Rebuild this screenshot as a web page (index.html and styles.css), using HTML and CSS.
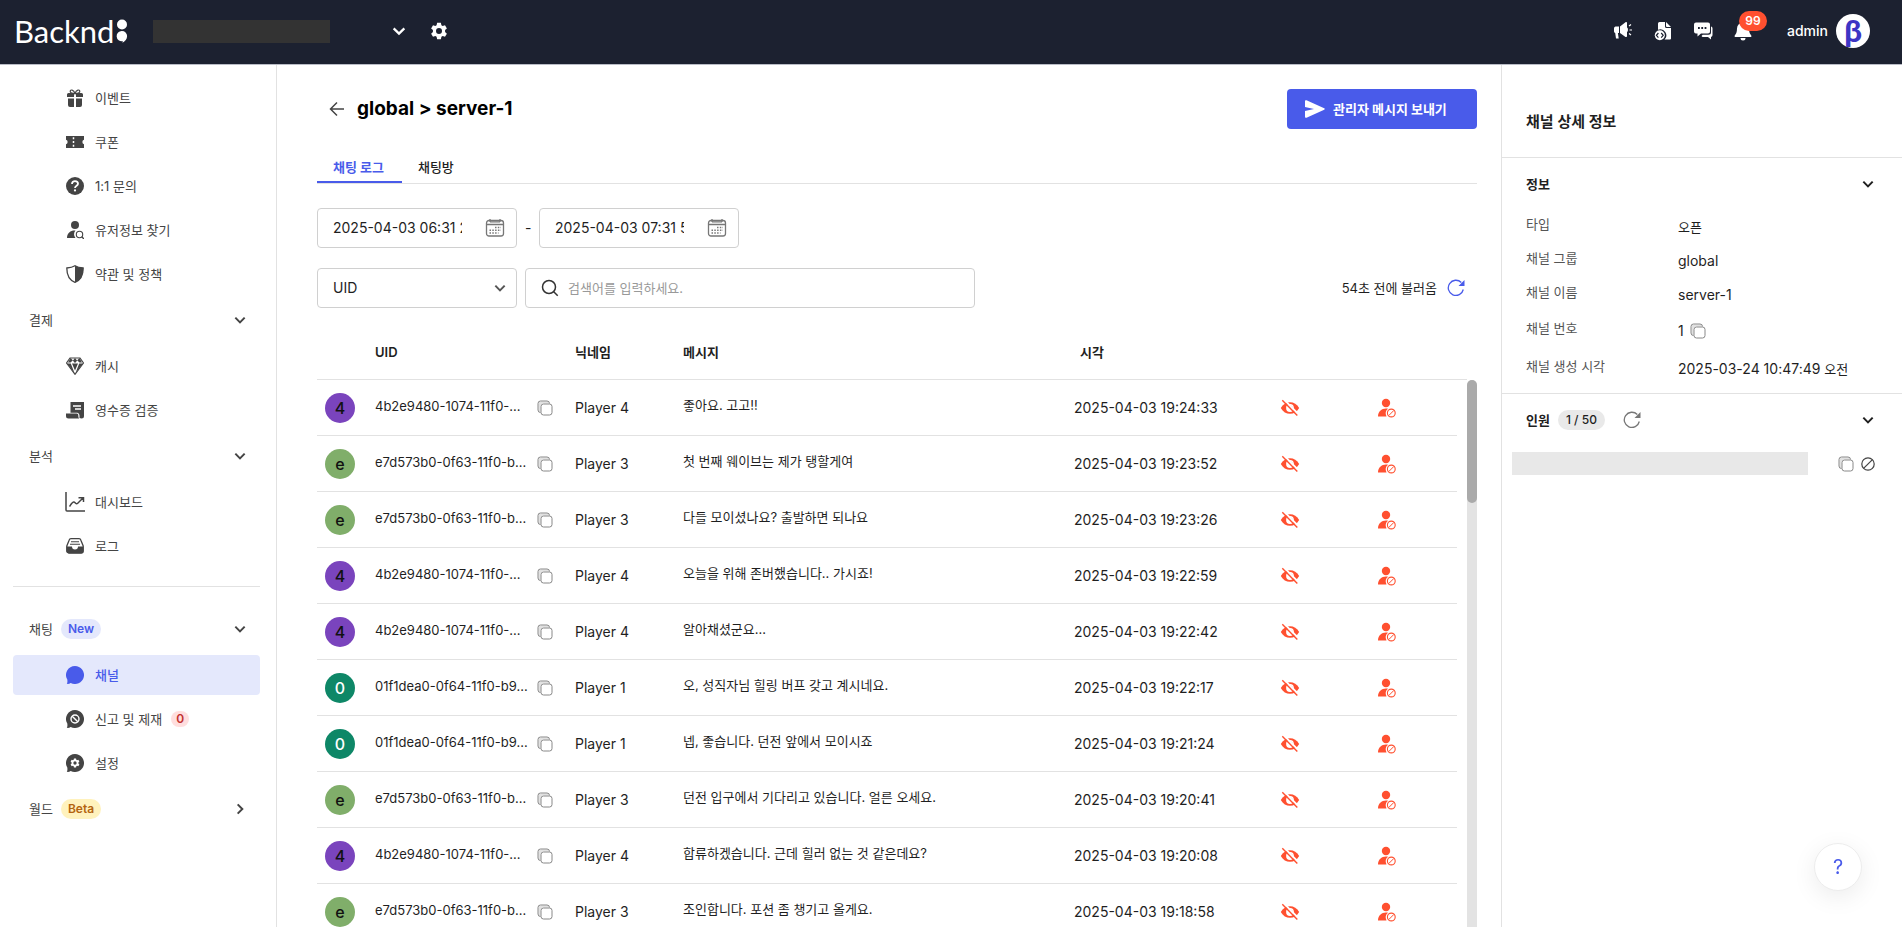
FILE: index.html
```html
<!DOCTYPE html>
<html lang="ko">
<head>
<meta charset="utf-8">
<meta name="viewport" content="width=device-width, initial-scale=1">
<title>Backnd - global &gt; server-1</title>
<link rel="stylesheet" href="styles.css">
</head>
<body>
<svg class="sprite" aria-hidden="true">
  <symbol id="down" viewBox="0 0 12 12"><path d="M2 4l4 4 4-4" fill="none" stroke="currentColor" stroke-width="1.7"/></symbol>
  <symbol id="right" viewBox="0 0 12 12"><path d="M4 2l4 4-4 4" fill="none" stroke="currentColor" stroke-width="1.7"/></symbol>
  <symbol id="copy" viewBox="0 0 16 16"><g fill="none" stroke="currentColor"><rect x="4" y="4" width="11" height="11" rx="2.5"/><path d="M3.5 12.5A2.5 2.5 0 0 1 1 10V3.500A2.500 2.500 0 0 1 3.500 1H10a2.500 2.500 0 0 1 2.500 2.500"/></g><path d="M1.500 10V3.500a2 2 0 0 1 2-2H10a2 2 0 0 1 2 2H6a2.500 2.500 0 0 0-2.500 2.500v6a2 2 0 0 1-2-2z" fill="currentColor" opacity=".25"/></symbol>
  <symbol id="refresh" viewBox="0 0 18 18"><path d="M16.300 10.500A7.600 7.600 0 1 1 14.300 3.500" fill="none" stroke="currentColor" stroke-width="1.300"/><path d="M17.500 1v6h-6z" fill="currentColor"/></symbol>
  <symbol id="eye" viewBox="0 0 20 18"><path d="M.8 9C3 5 6.200 3.200 10 3.200S17 5 19.200 9C17 13 13.800 14.800 10 14.800S3 13 .8 9z" fill="currentColor"/><circle cx="10" cy="9" r="3.900" fill="#fff"/><path d="M10 6.500A2.500 2.500 0 0 1 12.400 9.600L9.500 6.600z" fill="currentColor"/><path d="M3.700.4L19 15.700" stroke="#fff" stroke-width="2"/><path d="M2.300 1.300L17.300 16.500" stroke="currentColor" stroke-width="1.400"/></symbol>
  <symbol id="ban" viewBox="0 0 20 20"><circle cx="9" cy="5" r="4.200" fill="currentColor"/><path d="M1 18.500c0-5 3.500-8 8-8 .8 0 1.500.1 2 .3a5.800 5.800 0 0 0-1.500 7.700z" fill="currentColor"/><circle cx="14.300" cy="15" r="3.900" fill="none" stroke="currentColor" stroke-width="1.100"/><path d="M11.700 17.600l5.200-5.200" stroke="currentColor"/></symbol>
  <symbol id="bubble" viewBox="0 0 18 18"><path d="M9 0a9 9 0 1 1-4.300 16.900C3.300 17.900 2 18.100.8 17.800c.6-1 .8-2 .5-4.200A9 9 0 0 1 9 0z" fill="currentColor"/></symbol>
  <symbol id="gear" viewBox="0 0 24 24"><path fill="currentColor" fill-rule="evenodd" d="M9.500 1h5l.7 3.200 1.700 1 3.100-1 2.500 4.300-2.400 2.200v2.600l2.400 2.200-2.500 4.300-3.100-1-1.700 1-.7 3.200h-5l-.7-3.200-1.700-1-3.100 1-2.500-4.300 2.400-2.200v-2.600L1.500 8.500 4 4.200l3.100 1 1.700-1zM12 8a4 4 0 1 0 0 8 4 4 0 0 0 0-8z"/></symbol>
  <symbol id="calendar" viewBox="0 0 20 20"><g fill="none" stroke="currentColor" stroke-width="1.300"><rect x="1.500" y="2.500" width="17" height="15.500" rx="2.500"/><path d="M1.500 6.500h17M5 1v3M15 1v3M5 3.800h10"/></g><path d="M10 9.500h6M4.500 12.300h11.500M4.500 15h9" stroke="currentColor" stroke-width="1.500" stroke-dasharray="1.500 1.300"/></symbol>
</svg>

<header class="topbar">
  <a class="logo" href="#" aria-label="Backnd"><span>Backnd</span><svg width="12" height="24" viewBox="0 0 12 24"><circle cx="6" cy="5.500" r="5" fill="#fff"/><path d="M6 12a5.100 5.100 0 0 1 5.100 5.100c0 3-2 5.600-4.600 6.600l.2-1.600A5.100 5.100 0 1 1 6 12z" fill="#fff"/></svg></a>
  <div class="project"></div>
  <button class="icon-btn" aria-label="프로젝트 선택"><svg width="16" height="16"><use href="#down"/></svg></button>
  <button class="icon-btn gear" aria-label="설정"><svg width="18" height="18"><use href="#gear"/></svg></button>
  <div class="tools">
    <button class="icon-btn" aria-label="공지"><svg width="20" height="20" viewBox="0 0 20 20" fill="#fff"><path d="M1 7.500C1 6 2 5.500 3.500 5.500H6v6.500H4.900l.8 5.500H3L2.200 12C1.400 11.600 1 11 1 10zM7 5.500l5.500-4.200c.8-.5 1.500 0 1.500.8v4.500c1.300.5 1.300 4 0 4.500v4c0 .8-.7 1.300-1.500.8L7 12z"/><path d="M16 5l2-1.500M16.500 9h2.500M16 12.500l2 1.500" stroke="#fff" stroke-width="1.200"/></svg></button>
    <button class="icon-btn" aria-label="문서"><svg width="20" height="20" viewBox="0 0 20 20" fill="#fff"><path d="M5 2.500A1.500 1.500 0 0 1 6.500 1H12v4.500A1.500 1.500 0 0 0 13.500 7H18v10.500a1 1 0 0 1-1 1h-5.500A6 6 0 0 0 5 8.700zM13 1l5 5h-4a1 1 0 0 1-1-1z"/><circle cx="6.800" cy="14.300" r="5"/><path d="M5.400 12l-2 2.300 2 2.300M8.200 12l2 2.300-2 2.300" fill="none" stroke="#1c2130" stroke-width="1.200"/></svg></button>
    <button class="icon-btn" aria-label="채팅"><svg width="20" height="20" viewBox="0 0 20 20" fill="#fff"><path d="M3 1.500h12A2 2 0 0 1 17 3.500v7a2 2 0 0 1-2 2H8L4.500 15.500v-3H3a2 2 0 0 1-2-2v-7a2 2 0 0 1 2-2z"/><path d="M18 5.500c1 .3 1.500 1 1.500 2V14a2 2 0 0 1-1.500 2v2.500L15 16H9.500L8.500 15l1.200-1.300H15.500a2.500 2.500 0 0 0 2.500-2.500z"/><path d="M5 7h8.500" stroke="#1c2130" stroke-width="1.800" stroke-dasharray="1.800 1.500"/></svg></button>
    <button class="icon-btn bell" aria-label="알림 99"><svg width="20" height="20" viewBox="0 0 20 20" fill="#fff"><path d="M10 1.500a6 6 0 0 1 6 6c0 4 1 5.500 2.300 7v1.500H1.700v-1.500C3 13 4 11.500 4 7.500a6 6 0 0 1 6-6zM7.500 17h5a2.500 2.500 0 0 1-5 0z"/></svg><span class="count">99</span></button>
    <span class="user">admin</span>
    <a class="profile" href="#" aria-label="프로필">β</a>
  </div>
</header>

<div class="app">
  <nav class="sidebar">
    <a class="item" href="#"><svg width="18" height="18" viewBox="0 0 18 18" fill="currentColor"><path d="M1 5.500A1.500 1.500 0 0 1 2.500 4H8v4H1zM10 4h5.500A1.500 1.500 0 0 1 17 5.500V8h-7zM2 9.500h6V18H4a2 2 0 0 1-2-2zM10 9.500h6V16a2 2 0 0 1-2 2h-4z"/><path d="M8.800 4.500C7 4.500 4.200 4.200 4.200 2.300S7.700.2 9 4.500C10.300.2 13.800.4 13.800 2.300S11 4.500 9.200 4.500z" fill="none" stroke="currentColor" stroke-width="1.200"/></svg>이벤트</a>
    <a class="item" href="#"><svg width="18" height="18" viewBox="0 0 18 18" fill="currentColor"><path d="M0 3h18v3.800a2.300 2.300 0 0 0 0 4.400V15H0v-3.800a2.300 2.300 0 0 0 0-4.400z"/><path d="M7.500 4.200v10" stroke="#fff" stroke-width="1.500" stroke-dasharray="2 1.800"/></svg>쿠폰</a>
    <a class="item" href="#"><svg width="18" height="18" viewBox="0 0 18 18"><circle cx="9" cy="9" r="9" fill="currentColor"/><path d="M6 7c0-4 6-3.500 6-.3 0 2-3 2-3 4.300" fill="none" stroke="#fff" stroke-width="1.800"/><circle cx="9" cy="13.400" r="1.100" fill="#fff"/></svg>1:1 문의</a>
    <a class="item" href="#"><svg width="18" height="18" viewBox="0 0 18 18"><circle cx="9" cy="4" r="4" fill="currentColor"/><path d="M1 17c0-5 3.500-7.500 7.500-7.500h1a5.500 5.500 0 0 0 0 7.500z" fill="currentColor"/><circle cx="13.500" cy="13.500" r="3.200" fill="none" stroke="currentColor" stroke-width="1.100"/><path d="M15.700 15.700l2.300 2.300" stroke="currentColor" stroke-width="1.400"/></svg>유저정보 찾기</a>
    <a class="item" href="#"><svg width="18" height="18" viewBox="0 0 18 18"><path d="M9 .7c2.500 1.500 5 2 8.200 2.300 0 7.500-2 12-8.200 14.300C2.800 15 .8 10.500.8 3 4 2.700 6.500 2.200 9 .7z" fill="none" stroke="currentColor" stroke-width="1.300"/><path d="M9 .7c2.500 1.500 5 2 8.200 2.300 0 7.500-2 12-8.200 14.300z" fill="currentColor"/></svg>약관 및 정책</a>
    <button class="group">결제<svg class="arrow" width="14" height="14"><use href="#down"/></svg></button>
    <a class="item" href="#"><svg width="18" height="18" viewBox="0 0 18 18"><path d="M4 1h10l3.500 5L9 17.300.5 6z" fill="none" stroke="currentColor" stroke-width="1.200"/><path d="M4.500 1L7 3.500 9 1l2 2.500L13.500 1 16 5.500h-2.500L11.300 3.500 9 6 6.700 3.500 4.500 5.500H2zM1 6.500h3.800L8.500 16zM17 6.500h-3.800L9.500 16zM6 6.500h6L9 13.500z" fill="currentColor"/></svg>캐시</a>
    <a class="item" href="#"><svg width="18" height="18" viewBox="0 0 18 18"><path d="M4.500 1H18v14a2.500 2.500 0 0 1-2.500 2.500L13.500 17v-2.500a3 3 0 0 0-2-2.800H4.500zM0 12.500h10.500c1.500 0 1.800.8 1.800 2 0 1.500.2 2.300 1 3H2.500A2.500 2.500 0 0 1 0 15z" fill="currentColor"/><path d="M7 5h8M9 8h6" stroke="#fff" stroke-width="1.300"/></svg>영수증 검증</a>
    <button class="group">분석<svg class="arrow" width="14" height="14"><use href="#down"/></svg></button>
    <a class="item" href="#"><svg class="wide" width="20" height="20" viewBox="0 0 20 20" fill="none" stroke="currentColor" stroke-width="1.500"><path d="M1 0v18a1 1 0 0 0 1 1h18M4.500 14.500c2-3 3-5 4.500-4.500s2 2.500 3.500 1.500L18 6M13.500 5.800H18.500V10"/></svg>대시보드</a>
    <a class="item" href="#"><svg width="18" height="18" viewBox="0 0 18 18"><path d="M.8 9L3 3.500C3.400 2.200 4 1.700 5 1.700h8c1 0 1.600.5 2 1.800L17.200 9v5a2 2 0 0 1-2 2H2.800a2 2 0 0 1-2-2z" fill="none" stroke="currentColor" stroke-width="1.300"/><path d="M.5 9.500H6A3 3 0 0 0 12 9.500h5.500V14a2.300 2.300 0 0 1-2.300 2.300H2.800A2.300 2.300 0 0 1 .5 14z" fill="currentColor"/><path d="M5 4.700h8M4 7.200h10" stroke="currentColor" stroke-width="1.100"/></svg>로그</a>
    <hr>
    <button class="group">채팅<span class="pill new">New</span><svg class="arrow" width="14" height="14"><use href="#down"/></svg></button>
    <a class="item active" href="#" aria-current="page"><svg width="18" height="18"><use href="#bubble"/></svg>채널</a>
    <a class="item" href="#"><svg width="18" height="18" viewBox="0 0 18 18"><use href="#bubble"/><circle cx="9" cy="9" r="4" fill="none" stroke="#fff" stroke-width="1.400"/><path d="M6.200 6.200l5.600 5.600" stroke="#fff" stroke-width="1.400"/></svg>신고 및 제재<span class="pill zero">0</span></a>
    <a class="item" href="#"><svg width="18" height="18" viewBox="0 0 18 18"><use href="#bubble"/><g color="#fff"><use href="#gear" x="4" y="4" width="10" height="10"/></g></svg>설정</a>
    <button class="group">월드<span class="pill beta">Beta</span><svg class="arrow" width="14" height="14"><use href="#right"/></svg></button>
  </nav>

  <main class="main">
    <div class="head">
      <button class="icon-btn back" aria-label="뒤로"><svg width="16" height="16" viewBox="0 0 16 16" fill="none" stroke="#444" stroke-width="1.500"><path d="M15 8H2M8 1.500L1.500 8 8 14.500"/></svg></button>
      <h1>global &gt; server-1</h1>
      <button class="send"><svg width="20" height="18" viewBox="0 0 20 18"><path d="M0 1.200C0 .4.800 0 1.500.3L19.200 8.300c.8.400.8 1 0 1.400L1.500 17.700C.8 18 0 17.600 0 16.800V11l9-2-9-2z" fill="#fff"/></svg>관리자 메시지 보내기</button>
    </div>
    <div class="tabs" role="tablist">
      <button class="tab on" role="tab" aria-selected="true">채팅 로그</button>
      <button class="tab" role="tab" aria-selected="false">채팅방</button>
    </div>
    <div class="filters dates">
      <label class="field date"><input type="text" value="2025-04-03 06:31 24" aria-label="시작 시각"><svg width="20" height="20"><use href="#calendar"/></svg></label>
      <span class="dash">-</span>
      <label class="field date"><input type="text" value="2025-04-03 07:31 59" aria-label="종료 시각"><svg width="20" height="20"><use href="#calendar"/></svg></label>
    </div>
    <div class="filters">
      <div class="field pick"><select aria-label="검색 기준"><option>UID</option></select><svg width="14" height="14"><use href="#down"/></svg></div>
      <label class="field search"><svg width="18" height="18" viewBox="0 0 18 18" fill="none" stroke="#333" stroke-width="1.500"><circle cx="8" cy="8" r="6.500"/><path d="M12.700 12.700l4 4"/></svg><input type="text" placeholder="검색어를 입력하세요." aria-label="검색어"></label>
      <span class="loaded">54초 전에 불러옴</span>
      <button class="icon-btn reload" aria-label="새로고침"><svg width="18" height="18"><use href="#refresh"/></svg></button>
    </div>
    <div class="log">
      <table>
        <colgroup><col class="c-avatar"><col class="c-uid"><col class="c-nick"><col><col class="c-time"><col class="c-hide"><col class="c-ban"><col class="c-end"></colgroup>
        <thead><tr><th></th><th>UID</th><th>닉네임</th><th>메시지</th><th class="when">시각</th><th></th><th></th><th></th></tr></thead>
        <tbody>
          <tr><td><span class="avatar purple">4</span></td><td><div class="uid"><span>4b2e9480-1074-11f0-...</span><button class="icon-btn copy" aria-label="복사"><svg width="16" height="16"><use href="#copy"/></svg></button></div></td><td>Player 4</td><td class="msg">좋아요. 고고!!</td><td>2025-04-03 19:24:33</td><td><button class="icon-btn red" aria-label="숨기기"><svg width="20" height="18"><use href="#eye"/></svg></button></td><td><button class="icon-btn red" aria-label="제재"><svg width="20" height="20"><use href="#ban"/></svg></button></td><td class="end"></td></tr>
          <tr><td><span class="avatar green">e</span></td><td><div class="uid"><span>e7d573b0-0f63-11f0-b...</span><button class="icon-btn copy" aria-label="복사"><svg width="16" height="16"><use href="#copy"/></svg></button></div></td><td>Player 3</td><td class="msg">첫 번째 웨이브는 제가 탱할게여</td><td>2025-04-03 19:23:52</td><td><button class="icon-btn red" aria-label="숨기기"><svg width="20" height="18"><use href="#eye"/></svg></button></td><td><button class="icon-btn red" aria-label="제재"><svg width="20" height="20"><use href="#ban"/></svg></button></td><td class="end"></td></tr>
          <tr><td><span class="avatar green">e</span></td><td><div class="uid"><span>e7d573b0-0f63-11f0-b...</span><button class="icon-btn copy" aria-label="복사"><svg width="16" height="16"><use href="#copy"/></svg></button></div></td><td>Player 3</td><td class="msg">다들 모이셨나요? 출발하면 되나요</td><td>2025-04-03 19:23:26</td><td><button class="icon-btn red" aria-label="숨기기"><svg width="20" height="18"><use href="#eye"/></svg></button></td><td><button class="icon-btn red" aria-label="제재"><svg width="20" height="20"><use href="#ban"/></svg></button></td><td class="end"></td></tr>
          <tr><td><span class="avatar purple">4</span></td><td><div class="uid"><span>4b2e9480-1074-11f0-...</span><button class="icon-btn copy" aria-label="복사"><svg width="16" height="16"><use href="#copy"/></svg></button></div></td><td>Player 4</td><td class="msg">오늘을 위해 존버했습니다.. 가시죠!</td><td>2025-04-03 19:22:59</td><td><button class="icon-btn red" aria-label="숨기기"><svg width="20" height="18"><use href="#eye"/></svg></button></td><td><button class="icon-btn red" aria-label="제재"><svg width="20" height="20"><use href="#ban"/></svg></button></td><td class="end"></td></tr>
          <tr><td><span class="avatar purple">4</span></td><td><div class="uid"><span>4b2e9480-1074-11f0-...</span><button class="icon-btn copy" aria-label="복사"><svg width="16" height="16"><use href="#copy"/></svg></button></div></td><td>Player 4</td><td class="msg">알아채셨군요...</td><td>2025-04-03 19:22:42</td><td><button class="icon-btn red" aria-label="숨기기"><svg width="20" height="18"><use href="#eye"/></svg></button></td><td><button class="icon-btn red" aria-label="제재"><svg width="20" height="20"><use href="#ban"/></svg></button></td><td class="end"></td></tr>
          <tr><td><span class="avatar teal">0</span></td><td><div class="uid"><span>01f1dea0-0f64-11f0-b9...</span><button class="icon-btn copy" aria-label="복사"><svg width="16" height="16"><use href="#copy"/></svg></button></div></td><td>Player 1</td><td class="msg">오, 성직자님 힐링 버프 갖고 계시네요.</td><td>2025-04-03 19:22:17</td><td><button class="icon-btn red" aria-label="숨기기"><svg width="20" height="18"><use href="#eye"/></svg></button></td><td><button class="icon-btn red" aria-label="제재"><svg width="20" height="20"><use href="#ban"/></svg></button></td><td class="end"></td></tr>
          <tr><td><span class="avatar teal">0</span></td><td><div class="uid"><span>01f1dea0-0f64-11f0-b9...</span><button class="icon-btn copy" aria-label="복사"><svg width="16" height="16"><use href="#copy"/></svg></button></div></td><td>Player 1</td><td class="msg">넵, 좋습니다. 던전 앞에서 모이시죠</td><td>2025-04-03 19:21:24</td><td><button class="icon-btn red" aria-label="숨기기"><svg width="20" height="18"><use href="#eye"/></svg></button></td><td><button class="icon-btn red" aria-label="제재"><svg width="20" height="20"><use href="#ban"/></svg></button></td><td class="end"></td></tr>
          <tr><td><span class="avatar green">e</span></td><td><div class="uid"><span>e7d573b0-0f63-11f0-b...</span><button class="icon-btn copy" aria-label="복사"><svg width="16" height="16"><use href="#copy"/></svg></button></div></td><td>Player 3</td><td class="msg">던전 입구에서 기다리고 있습니다. 얼른 오세요.</td><td>2025-04-03 19:20:41</td><td><button class="icon-btn red" aria-label="숨기기"><svg width="20" height="18"><use href="#eye"/></svg></button></td><td><button class="icon-btn red" aria-label="제재"><svg width="20" height="20"><use href="#ban"/></svg></button></td><td class="end"></td></tr>
          <tr><td><span class="avatar purple">4</span></td><td><div class="uid"><span>4b2e9480-1074-11f0-...</span><button class="icon-btn copy" aria-label="복사"><svg width="16" height="16"><use href="#copy"/></svg></button></div></td><td>Player 4</td><td class="msg">합류하겠습니다. 근데 힐러 없는 것 같은데요?</td><td>2025-04-03 19:20:08</td><td><button class="icon-btn red" aria-label="숨기기"><svg width="20" height="18"><use href="#eye"/></svg></button></td><td><button class="icon-btn red" aria-label="제재"><svg width="20" height="20"><use href="#ban"/></svg></button></td><td class="end"></td></tr>
          <tr><td><span class="avatar green">e</span></td><td><div class="uid"><span>e7d573b0-0f63-11f0-b...</span><button class="icon-btn copy" aria-label="복사"><svg width="16" height="16"><use href="#copy"/></svg></button></div></td><td>Player 3</td><td class="msg">조인합니다. 포션 좀 챙기고 올게요.</td><td>2025-04-03 19:18:58</td><td><button class="icon-btn red" aria-label="숨기기"><svg width="20" height="18"><use href="#eye"/></svg></button></td><td><button class="icon-btn red" aria-label="제재"><svg width="20" height="20"><use href="#ban"/></svg></button></td><td class="end"></td></tr>
        </tbody>
      </table>
      <div class="track"><div class="thumb"></div></div>
    </div>
  </main>

  <aside class="detail">
    <h2>채널 상세 정보</h2>
    <section class="info">
      <div class="section-head"><h3>정보</h3><button class="icon-btn toggle" aria-label="정보 접기"><svg width="14" height="14"><use href="#down"/></svg></button></div>
      <dl>
        <div><dt>타입</dt><dd class="ko">오픈</dd></div>
        <div><dt>채널 그룹</dt><dd>global</dd></div>
        <div><dt>채널 이름</dt><dd>server-1</dd></div>
        <div class="tall"><dt>채널 번호</dt><dd>1<button class="icon-btn copy" aria-label="복사"><svg width="16" height="16"><use href="#copy"/></svg></button></dd></div>
        <div class="tall"><dt>채널 생성 시각</dt><dd class="made">2025-03-24 10:47:49 <span class="ko">오전</span></dd></div>
      </dl>
    </section>
    <section class="people">
      <div class="section-head"><h3>인원</h3><span class="pill seats">1 / 50</span><button class="icon-btn again" aria-label="새로고침"><svg width="18" height="18"><use href="#refresh"/></svg></button><button class="icon-btn toggle" aria-label="인원 접기"><svg width="14" height="14"><use href="#down"/></svg></button></div>
      <div class="person"><div class="name"></div><button class="icon-btn copy" aria-label="복사"><svg width="16" height="16"><use href="#copy"/></svg></button><button class="icon-btn block" aria-label="차단"><svg width="14" height="14" viewBox="0 0 14 14" fill="none" stroke="#444" stroke-width="1.200"><circle cx="7" cy="7" r="6.200"/><path d="M2.800 11.200l8.400-8.400"/></svg></button></div>
    </section>
  </aside>
</div>
<button class="help" aria-label="도움말">?</button>
</body>
</html>
```
FILE: styles.css
```css
* { box-sizing: border-box; }
body {
  margin: 0;
  height: 100vh;
  display: flex;
  flex-direction: column;
  overflow: hidden;
  background: #fff;
  color: #1f1f1f;
  font: 14px/20px Inter, "Noto Sans CJK KR", sans-serif;
}
a { color: inherit; text-decoration: none; }
button { font: inherit; color: inherit; background: none; border: 0; padding: 0; margin: 0; cursor: pointer; text-align: left; }
input, select { font: inherit; color: inherit; background: none; border: 0; padding: 0; margin: 0; outline: 0; min-width: 0; }
h1, h2, h3, dl, dd { margin: 0; }
svg { display: block; flex: none; }
.sprite { position: absolute; width: 0; height: 0; }
.icon-btn { display: flex; align-items: center; flex: none; }

/* Top bar */
.topbar {
  flex: none;
  height: 65px;
  display: flex;
  align-items: center;
  padding: 0 32px 2px 14px;
  background: #1c2130;
  border-bottom: 1px solid #b9bcc6;
  color: #fff;
}
.logo { display: flex; align-items: center; gap: 2px; font: 31px/32px Lato, sans-serif; width: 139px; }
.project { width: 177px; height: 23px; background: #333; }
.project + .icon-btn { margin-left: 61px; }
.gear { margin-left: 23px; }
.tools { margin-left: auto; display: flex; align-items: center; gap: 20px; }
.bell { position: relative; }
.count {
  position: absolute;
  left: 6px;
  top: -10px;
  width: 28px;
  background: #ff5030;
  border-radius: 10px;
  font-size: 12px;
  font-weight: 600;
  text-align: center;
}
.user { margin-left: 14px; font-weight: 500; }
.profile {
  width: 34px;
  height: 34px;
  margin-left: -12px;
  border-radius: 50%;
  background: #fff;
  color: #3d35c4;
  font: 900 31px/32px Lato, sans-serif;
  text-align: center;
}

.app { flex: 1; min-height: 0; display: flex; }

/* Sidebar */
.sidebar {
  flex: none;
  width: 277px;
  padding: 13px 16px 12px 13px;
  border-right: 1px solid #e2e2e2;
  display: flex;
  flex-direction: column;
  gap: 4px;
  font-size: 13px;
  color: #444;
}
.item, .group { display: flex; align-items: center; border-radius: 4px; flex: none; }
.item { height: 40px; padding-left: 53px; gap: 11px; }
.group { height: 44px; padding: 0 13px 0 16px; gap: 8px; }
.arrow { margin-left: auto; }
.wide { margin: 0 -1px; }
.active { background: #e4e8fc; color: #495bea; font-weight: 500; }
.sidebar hr { width: 100%; height: 1px; margin: 16px 0; border: 0; background: #e2e2e2; flex: none; }
.pill { padding: 0 7px; border-radius: 10px; font-size: 12px; font-weight: 600; }
.new { background: #e4e8fc; color: #495bea; }
.beta { background: #fff2bd; color: #b4640f; }
.zero { padding: 0 5px; line-height: 16px; background: #ffdede; color: #c23030; margin-left: -2px; }

/* Main */
.main { flex: 1; min-width: 0; padding: 24px 24px 0 40px; overflow: hidden; display: flex; flex-direction: column; }
.head { display: flex; align-items: center; flex: none; }
.back { margin-left: 12px; }
h1 { margin-left: 12px; font-size: 19px; line-height: 24px; font-weight: 700; color: #000; }
.send {
  margin-left: auto;
  width: 190px;
  height: 40px;
  padding-left: 18px;
  display: flex;
  align-items: center;
  gap: 8px;
  border-radius: 4px;
  background: #495bea;
  color: #fff;
  font-size: 13px;
  font-weight: 700;
}
.tabs { flex: none; display: flex; margin-top: 23px; border-bottom: 1px solid #e2e2e2; }
.tab { height: 31px; padding: 0 18px 0 16px; font-size: 13px; font-weight: 500; border-bottom: 2px solid transparent; }
.on { color: #495bea; font-weight: 700; border-color: #495bea; }
.filters { flex: none; display: flex; align-items: center; margin-top: 20px; gap: 8px; }
.dates { margin-top: 24px; }
.field { height: 40px; display: flex; align-items: center; border: 1px solid #d0d0d0; border-radius: 4px; padding: 0 11px 0 15px; }
.date { width: 200px; justify-content: space-between; }
.date input { width: 129px; }
.date svg { color: #777; }
.dash { width: 6px; text-align: center; }
.pick { width: 200px; display: grid; }
.pick select { grid-area: 1 / 1; appearance: none; width: 100%; }
.pick svg { grid-area: 1 / 1; justify-self: end; pointer-events: none; color: #555; margin-right: -2px; }
.search { width: 450px; gap: 9px; }
.search input { flex: 1; font-size: 13px; }
.search input::placeholder { color: #999; opacity: 1; }
.loaded { margin-left: auto; font-size: 13px; }
.reload { color: #495bea; margin: 0 12px 0 2px; }

/* Chat log */
.log { display: flex; margin-top: 16px; flex: 1; min-height: 0; }
table { flex: 1; table-layout: fixed; border-collapse: separate; border-spacing: 0; align-self: flex-start; }
.c-avatar { width: 58px; }
.c-uid { width: 200px; }
.c-nick { width: 108px; }
.c-time { width: 206px; }
.c-hide { width: 97px; }
.c-ban { width: 80px; }
.c-end { width: 10px; }
th, td { height: 56px; padding: 0; text-align: left; border-bottom: 1px solid #e2e2e2; vertical-align: middle; }
th { font-size: 13px; font-weight: 600; }
.when { padding-left: 6px; }
.end { border-bottom: 0; }
.avatar { display: block; width: 30px; height: 30px; margin-left: 8px; border-radius: 50%; font-size: 16px; line-height: 30px; text-align: center; font-weight: 500; color: #111; }
.purple { background: #7a44bd; }
.green { background: #80ae6a; }
.teal { background: #0e8767; color: #fff; }
.uid { display: flex; align-items: center; }
.uid span { width: 162px; padding-bottom: 4px; font-size: 13px; white-space: nowrap; }
.copy { color: #888; }
.msg { font-size: 13px; padding-bottom: 5px; }
.red { color: #ff5030; }
.track { flex: none; width: 10px; margin-top: 56px; background: #e3e3e3; border-radius: 5px 5px 0 0; }
.thumb { height: 123px; border-radius: 5px; background: #aaa; }

/* Channel details */
.detail { flex: none; width: 401px; border-left: 1px solid #e2e2e2; }
h2 { padding: 45px 24px 23px; font-size: 15px; line-height: 24px; font-weight: 600; border-bottom: 1px solid #e2e2e2; }
h3 { font-size: 13px; font-weight: 600; line-height: 20px; }
.section-head { display: flex; align-items: center; height: 24px; }
.toggle { margin-left: auto; }
.info { padding: 14px 27px 7px 24px; border-bottom: 1px solid #e2e2e2; }
dl { padding-top: 12px; }
dl div { display: flex; align-items: center; height: 34px; }
dl .tall { height: 38px; }
dt { width: 152px; font-size: 13px; color: #555; padding-bottom: 3px; }
dd { display: flex; align-items: center; gap: 6px; padding-top: 3px; }
.made { display: block; }
.ko { font-size: 13px; }
.people { padding: 14px 27px 0 24px; }
.seats { padding: 0 8px; margin-left: 8px; background: #e9e9e9; font-weight: 500; }
.again { margin-left: 18px; color: #777; }
.person { display: flex; align-items: center; margin: 20px 0 0 -14px; }
.name { flex: 1; height: 23px; background: #e8e8e8; margin-right: 30px; }
.block { margin-left: 7px; }

.help {
  position: fixed;
  right: 40px;
  bottom: 36px;
  width: 48px;
  height: 48px;
  border: 1px solid #ececec;
  border-radius: 50%;
  background: #fff;
  box-shadow: 0 6px 24px rgba(0, 0, 0, .08);
  color: #495bea;
  font-size: 20px;
  text-align: center;
}
```
